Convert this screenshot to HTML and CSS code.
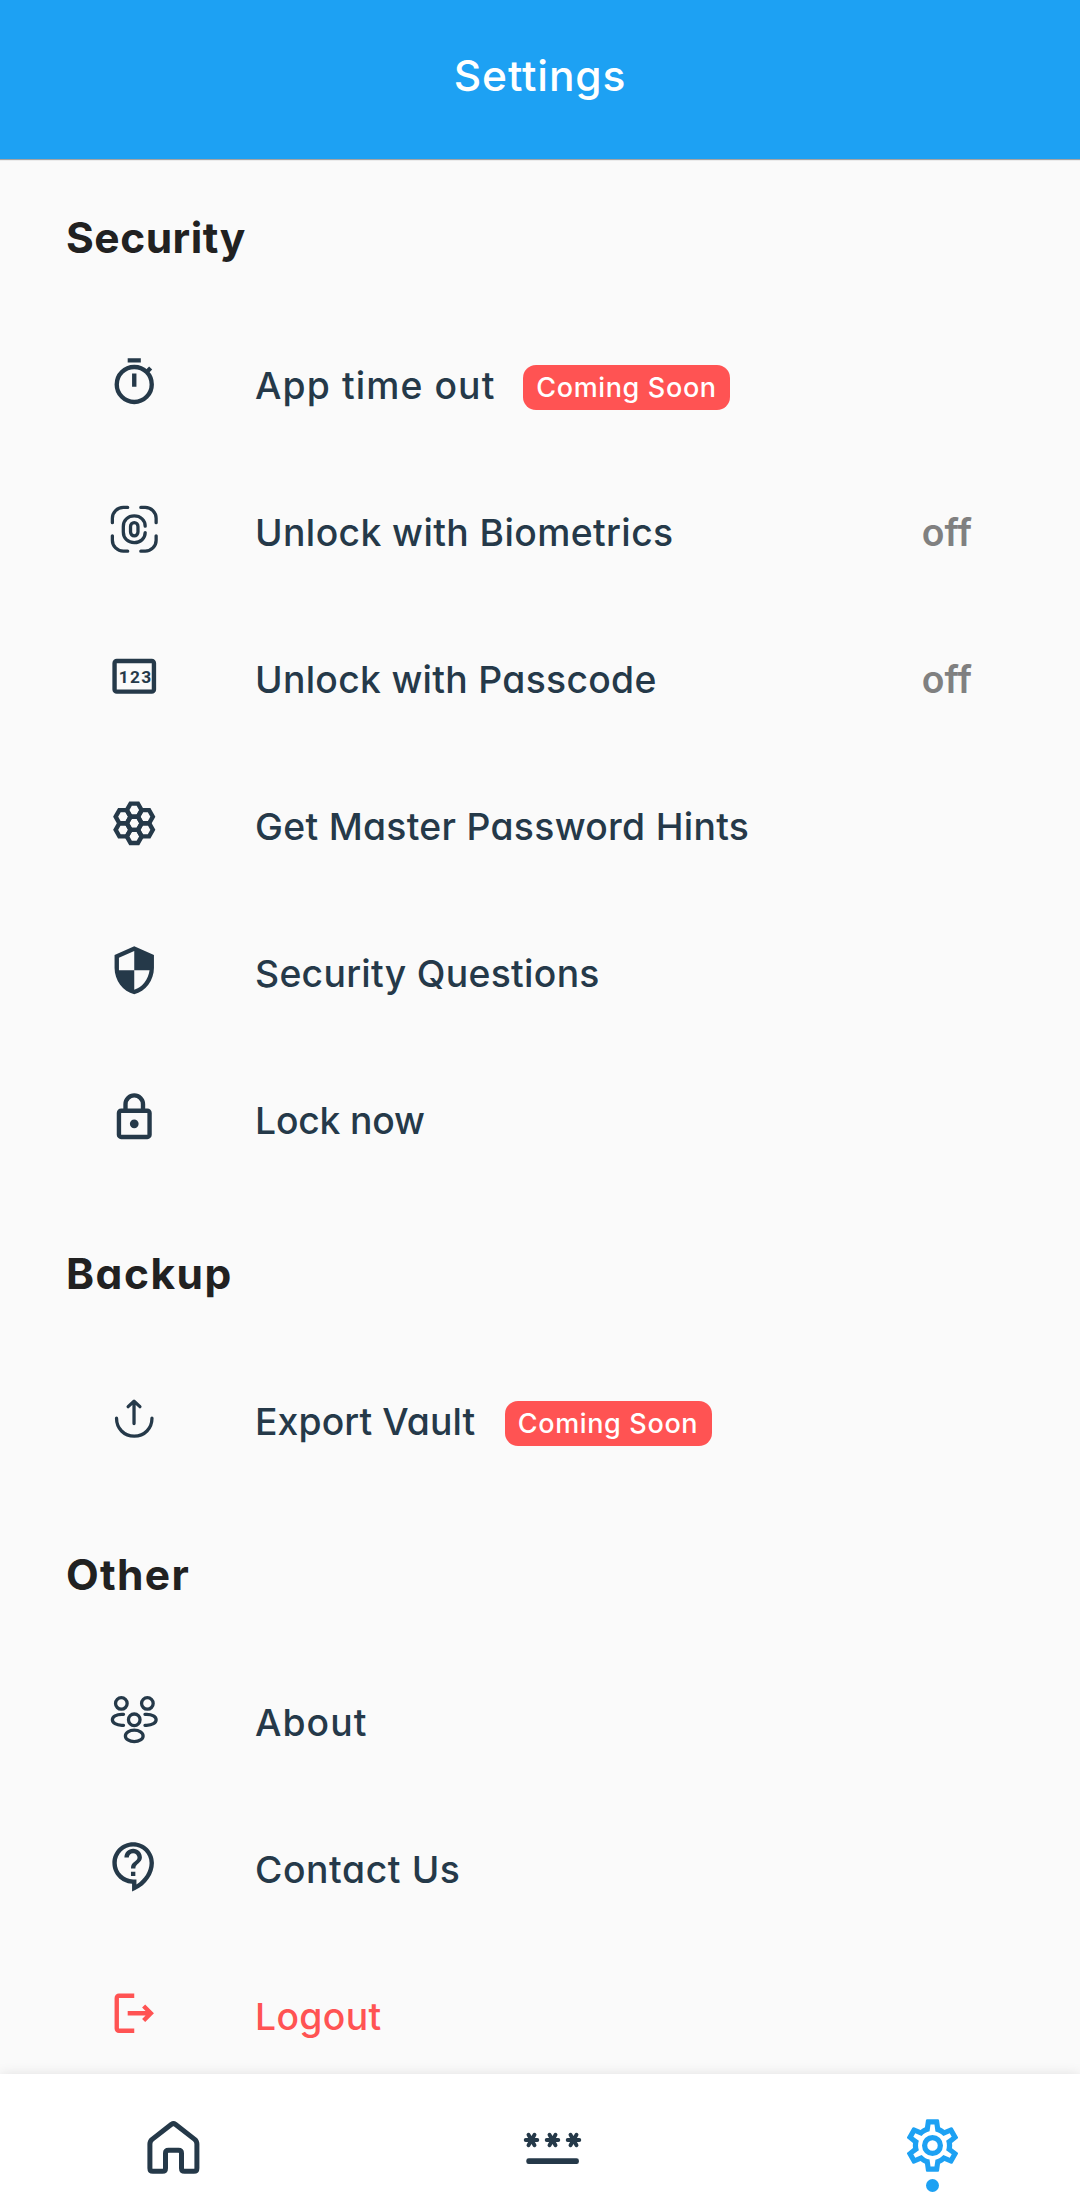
FILE: index.html
```
<!DOCTYPE html>
<html lang="en">
<head>
<meta charset="utf-8">
<title>Settings</title>
<link rel="stylesheet" href="styles.css">
</head>
<body>
<div class="app">
  <header class="app-bar"><h1 class="app-title">Settings</h1></header>

  <main class="content">
    <h2 class="section-title first">Security</h2>
    <ul class="list">
      <li class="row">
        <svg class="icon" viewBox="0 0 24 24"><path d="M9 1h6v2H9zM11 8h2v6h-2z"/><circle class="line" cx="12" cy="13" r="8" stroke-width="2"/><path class="line" stroke-width="2" d="M17.6 7.4l1.9-1.9"/></svg>
        <span class="label l-timeout">App time out</span>
        <span class="badge">Coming Soon</span>
      </li>
      <li class="row">
        <svg class="icon" viewBox="0 0 24 24"><path class="line round" stroke-width="1.5" d="M2 9V7a5 5 0 0 1 5-5h2M15 2h2a5 5 0 0 1 5 5v2M22 15v2a5 5 0 0 1-5 5h-2M9 22H7a5 5 0 0 1-5-5v-2M17 10.6C17 7.9 14.9 5.9 12 5.9S7 7.9 7 10.7v2.6c0 2.8 2.1 4.8 5 4.8s5-2 5-4.6"/><rect class="line" stroke-width="1.5" x="10.3" y="9" width="3.4" height="6" rx="1.7"/></svg>
        <span class="label l-biometrics">Unlock with Biometrics</span>
        <span class="state">off</span>
      </li>
      <li class="row">
        <svg class="icon" viewBox="0 0 24 24"><rect class="line" stroke-width="2" x="3" y="5" width="18" height="14" rx="1"/><text class="digits" x="4.9" y="15.1">123</text></svg>
        <span class="label l-passcode">Unlock with Passcode</span>
        <span class="state">off</span>
      </li>
      <li class="row">
        <svg class="icon" viewBox="0 0 24 24"><defs><path id="cell" d="M-3.4 0l1.7-3h3.4l1.7 3-1.7 3h-3.4z"/></defs><g class="line" stroke-width="2"><use href="#cell" x="12" y="12"/><use href="#cell" x="12" y="6"/><use href="#cell" x="12" y="18"/><use href="#cell" x="6.9" y="9"/><use href="#cell" x="6.9" y="15"/><use href="#cell" x="17.1" y="9"/><use href="#cell" x="17.1" y="15"/></g></svg>
        <span class="label l-hints">Get Master Password Hints</span>
      </li>
      <li class="row">
        <svg class="icon" viewBox="0 0 24 24"><path d="M12 1L3 5v6c0 5.55 3.84 10.74 9 12 5.16-1.26 9-6.45 9-12V5l-9-4zm0 10.99h7c-.53 4.12-3.28 7.79-7 8.94V12H5V6.3l7-3.11v8.8z"/></svg>
        <span class="label l-questions">Security Questions</span>
      </li>
      <li class="row">
        <svg class="icon" viewBox="0 0 24 24"><path d="M12 17a2 2 0 1 1 0-4 2 2 0 0 1 0 4m6 3V10H6v10h12m0-12a2 2 0 0 1 2 2v10a2 2 0 0 1-2 2H6a2 2 0 0 1-2-2V10c0-1.11.89-2 2-2h1V6a5 5 0 0 1 10 0v2h1m-6-5a3 3 0 0 0-3 3v2h6V6a3 3 0 0 0-3-3z"/></svg>
        <span class="label l-lock">Lock now</span>
      </li>
    </ul>

    <h2 class="section-title backup">Backup</h2>
    <ul class="list">
      <li class="row">
        <svg class="icon" viewBox="0 0 24 24"><path class="line round" stroke-width="1.5" d="M9.2 6.7l2.7-2.5 2.7 2.5M11.9 14.4V4.4M3.9 12c0 4.6 3.4 8.2 8.1 8.2s8.1-3.6 8.1-8.2"/></svg>
        <span class="label l-export">Export Vault</span>
        <span class="badge">Coming Soon</span>
      </li>
    </ul>

    <h2 class="section-title other">Other</h2>
    <ul class="list">
      <li class="row">
        <svg class="icon" viewBox="0 0 24 24"><g class="line round" stroke-width="1.5"><circle cx="6.1" cy="4.75" r="2.65"/><circle cx="18" cy="4.75" r="2.65"/><circle cx="12" cy="12.25" r="2.65"/><ellipse cx="12" cy="19.6" rx="4.05" ry="2.65"/><path d="M7.1 9.75H6.3C3.8 9.75 2 10.85 2 12.25s1.8 2.5 4.3 2.5h.8M16.9 9.75h.8c2.5 0 4.3 1.1 4.3 2.5s-1.8 2.5-4.3 2.5h-.8"/></g></svg>
        <span class="label l-about">About</span>
      </li>
      <li class="row">
        <svg class="icon" viewBox="0 0 24 24"><path d="M11 23.59v-3.6c-5.01-.26-9-4.42-9-9.49C2 5.26 6.26 1 11.5 1S21 5.26 21 10.5c0 4.95-3.44 9.93-8.57 12.4l-1.43.69zM11.5 3C7.36 3 4 6.36 4 10.5S7.36 18 11.5 18H13v2.3c3.64-2.3 6-6.08 6-9.8C19 6.36 15.64 3 11.5 3zm-1 11.5h2v2h-2zm2-1.5h-2c0-3.25 3-3 3-5 0-1.1-.9-2-2-2s-2 .9-2 2h-2c0-2.21 1.79-4 4-4s4 1.79 4 4c0 2.5-3 2.75-3 5z"/></svg>
        <span class="label l-contact">Contact Us</span>
      </li>
      <li class="row danger">
        <svg class="icon" viewBox="0 0 24 24"><path d="M12 3H5a2 2 0 0 0-2 2v14a2 2 0 0 0 2 2h7v-2H5V5h7zM17 8l-1.41 1.41L17.17 11H9v2h8.17l-1.58 1.58L17 16l4-4z"/></svg>
        <span class="label l-logout">Logout</span>
      </li>
    </ul>
  </main>

  <nav class="tab-bar">
    <a class="tab"><svg class="tab-icon" viewBox="1.5 -1 63 63"><path class="line round" stroke-width="5" d="M31 9.3L11.6 24.4Q9.4 26.2 9.4 29V53.3Q9.4 56.3 12.4 56.3H22Q25 56.3 25 53.3V38.3Q25 35.3 28 35.3H38Q41 35.3 41 38.3V53.3Q41 56.3 44 56.3H53.4Q56.4 56.3 56.4 53.3V29Q56.4 26.2 54.2 24.4L34.8 9.3Q33 8 31 9.3Z"/></svg></a>
    <a class="tab"><svg class="tab-icon" viewBox="1.5 -1 63 63"><defs><path id="star" d="M-5.8 0H5.8M-3 -5.2L3 5.2M3 -5.2L-3 5.2"/></defs><g class="line round" stroke-width="3.9"><use href="#star" x="12" y="25"/><use href="#star" x="33" y="25"/><use href="#star" x="54" y="25"/></g><rect x="6.8" y="43.3" width="52.6" height="5.8" rx="2.4"/></svg></a>
    <a class="tab active"><svg class="tab-icon" viewBox="0 0 24 24"><path d="M12 8a4 4 0 1 1 0 8 4 4 0 0 1 0-8m0 2a2 2 0 1 0 0 4 2 2 0 0 0 0-4M10 22C9.75 22 9.54 21.82 9.5 21.58L9.13 18.93C8.5 18.68 7.96 18.34 7.44 17.94L4.95 18.95C4.73 19.03 4.46 18.95 4.34 18.73L2.34 15.27C2.21 15.05 2.27 14.78 2.46 14.63L4.57 12.97L4.5 12L4.57 11L2.46 9.37C2.27 9.22 2.21 8.95 2.34 8.73L4.34 5.27C4.46 5.05 4.73 4.96 4.95 5.05L7.44 6.05C7.96 5.66 8.5 5.32 9.13 5.07L9.5 2.42C9.54 2.18 9.75 2 10 2H14C14.25 2 14.46 2.18 14.5 2.42L14.87 5.07C15.5 5.32 16.04 5.66 16.56 6.05L19.05 5.05C19.27 4.96 19.54 5.05 19.66 5.27L21.66 8.73C21.79 8.95 21.73 9.22 21.54 9.37L19.43 11L19.5 12L19.43 13L21.54 14.63C21.73 14.78 21.79 15.05 21.66 15.27L19.66 18.73C19.54 18.95 19.27 19.04 19.05 18.95L16.56 17.95C16.04 18.34 15.5 18.68 14.87 18.93L14.5 21.58C14.46 21.82 14.25 22 14 22H10M11.25 4L10.88 6.61C9.68 6.86 8.62 7.5 7.85 8.39L5.44 7.35L4.69 8.65L6.8 10.2C6.4 11.37 6.4 12.64 6.8 13.8L4.68 15.36L5.43 16.66L7.86 15.62C8.63 16.5 9.68 17.14 10.87 17.38L11.24 20H12.76L13.13 17.39C14.32 17.14 15.37 16.5 16.14 15.62L18.57 16.66L19.32 15.36L17.2 13.81C17.6 12.64 17.6 11.37 17.2 10.2L19.31 8.65L18.56 7.35L16.15 8.39C15.38 7.5 14.32 6.86 13.12 6.62L12.75 4H11.25Z"/></svg><span class="dot"></span></a>
  </nav>
</div>
</body>
</html>
```
FILE: styles.css
```
* { box-sizing: border-box; }

body {
  margin: 0;
  background: #fafafa;
  color: #253949;
  font-family: Inter, "Open Sans", sans-serif;
  font-feature-settings: "cv11";
}

.app {
  display: flex;
  flex-direction: column;
  width: 1080px;
  height: 2210px;
  overflow: hidden;
}

.app-bar {
  flex: none;
  display: flex;
  justify-content: center;
  height: 159px;
  padding: 46px 0 0;
  background: #1da1f3;
  box-shadow: 0 1px 1px rgba(0, 0, 0, 0.35);
  z-index: 1;
}

.app-title {
  margin: 0;
  color: #fff;
  font-size: 42.5px;
  font-weight: 500;
  line-height: 60px;
  letter-spacing: 0.85px;
}

.content {
  flex: none;
  height: 1915px;
  overflow: hidden;
}

.section-title {
  display: flex;
  align-items: center;
  height: 154px;
  margin: 0;
  padding: 10px 0 0 66px;
  color: #212121;
  font-size: 42.5px;
  font-weight: 700;
  letter-spacing: 0.5px;
}
.section-title.first { height: 150px; padding-top: 6px; }
.section-title.backup { letter-spacing: 1.5px; }
.section-title.other { letter-spacing: 1.3px; }

.list {
  margin: 0;
  padding: 0;
  list-style: none;
}

.row {
  display: flex;
  align-items: center;
  height: 147px;
  padding: 0 108px;
}

.danger { color: #ff5353; }

.icon {
  flex: none;
  width: 52.5px;
  height: 52.5px;
  margin-right: 94.5px;
  fill: currentColor;
}

.line { fill: none; stroke: currentColor; }
.round { stroke-linecap: round; stroke-linejoin: round; }

.digits {
  font: 700 7.9px Roboto, sans-serif;
  letter-spacing: 0.6px;
}

.label {
  padding-top: 7px;
  font-size: 37.3px;
  font-weight: 500;
  line-height: 44px;
  white-space: nowrap;
}
.l-timeout { width: 268px; letter-spacing: 1.1px; }
.l-biometrics { letter-spacing: 0.4px; }
.l-passcode { letter-spacing: 0.3px; }
.l-hints { letter-spacing: 0.3px; }
.l-questions { letter-spacing: 0.3px; }
.l-lock { letter-spacing: -0.2px; }
.l-export { width: 249.5px; letter-spacing: 0.1px; }
.l-about { letter-spacing: 1.05px; }
.l-contact { letter-spacing: 0.6px; }
.l-logout { letter-spacing: 0.35px; }

.badge {
  display: flex;
  align-items: center;
  justify-content: center;
  width: 207px;
  height: 45px;
  margin-top: 10px;
  border-radius: 13px;
  background: #ff5353;
  color: #fff;
  font-size: 27px;
  font-weight: 500;
  letter-spacing: 0.65px;
  white-space: nowrap;
}

.state {
  margin-left: auto;
  padding-top: 7px;
  color: #808080;
  font-size: 37.3px;
  font-weight: 600;
  line-height: 44px;
}

.tab-bar {
  flex: none;
  display: flex;
  justify-content: space-between;
  height: 136px;
  padding: 40px 116.5px 0 141.5px;
  background: #fff;
  box-shadow: 0 0 12px rgba(0, 0, 0, 0.1);
  z-index: 1;
}

.tab {
  display: flex;
  flex-direction: column;
  align-items: center;
  color: #253949;
}

.tab-icon {
  width: 63px;
  height: 63px;
  fill: currentColor;
}

.active { color: #1da1f3; }

.dot {
  width: 13px;
  height: 13px;
  margin-top: 2px;
  border-radius: 50%;
  background: currentColor;
}
```
